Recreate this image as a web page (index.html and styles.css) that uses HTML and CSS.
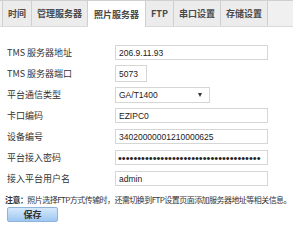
FILE: index.html
```html
<!DOCTYPE html>
<html lang="zh-CN">

<head>
    <meta charset="UTF-8">
    <title>照片服务器</title>
    <link rel="stylesheet" href="styles.css">
</head>

<body>
    <ul class="tabs">
        <li class="tab">时间</li>
        <li class="tab">管理服务器</li>
        <li class="tab active">照片服务器</li>
        <li class="tab">FTP</li>
        <li class="tab">串口设置</li>
        <li class="tab">存储设置</li>
    </ul>

    <div class="form">
        <div class="row">
            <label>TMS 服务器地址</label>
            <input type="text" class="field" value="206.9.11.93">
        </div>
        <div class="row">
            <label>TMS 服务器端口</label>
            <input type="text" class="field port" value="5073">
        </div>
        <div class="row">
            <label>平台通信类型</label>
            <div class="select">
                <span>GA/T1400</span>
                <span class="arrow"></span>
            </div>
        </div>
        <div class="row">
            <label>卡口编码</label>
            <input type="text" class="field" value="EZIPC0">
        </div>
        <div class="row">
            <label>设备编号</label>
            <input type="text" class="field" value="34020000001210000625">
        </div>
        <div class="row">
            <label>平台接入密码</label>
            <input type="password" class="field pass" value="abcdefghijklmnopqrstuvwxyzabcdefghijk">
        </div>
        <div class="row">
            <label>接入平台用户名</label>
            <input type="text" class="field" value="admin">
        </div>

        <p class="note"><b>注意：</b>照片选择FTP方式传输时，还需切换到FTP设置页面添加服务器地址等相关信息。</p>
        <button class="save">保存</button>
    </div>
</body>

</html>
```

FILE: styles.css
```css
body {
    margin: 0;
    background-color: #fff;
    font-family: "Noto Sans CJK SC", "Liberation Sans", sans-serif;
    font-size: 9px;
    color: #333;
}

.tabs {
    display: flex;
    margin: 0;
    padding: 0 0 0 2px;
    list-style: none;
    height: 27px;
    background-color: #f0f0f0;
    border-top: 1px solid #d0d0d0;
    border-bottom: 1px solid #dadada;
    box-sizing: border-box;
}

.tab {
    display: flex;
    align-items: center;
    padding: 0 5px;
    font-size: 9px;
    font-weight: bold;
    color: #4a4a4a;
    border-right: 1px solid #cfcfcf;
    background-color: #ececec;
}

.tab:first-child {
    border-left: 1px solid #cfcfcf;
}

.tab.active {
    padding: 0 6px;
    background-color: #fff;
    margin-bottom: -1px;
}

.form {
    padding: 15px 0 0 7px;
}

.row {
    display: flex;
    align-items: center;
    height: 21px;
}

.row label {
    width: 108px;
    color: #333;
}

.field {
    width: 153px;
    height: 15px;
    padding: 0 3px;
    box-sizing: border-box;
    border: 1px solid #d6d6d6;
    font-family: "Liberation Sans", sans-serif;
    font-size: 8.5px;
    color: #222;
    outline: none;
}

.field.port {
    width: 32px;
    height: 17px;
}

.field.pass {
    font-size: 11px;
    padding: 0 2px;
}

.select {
    display: flex;
    align-items: center;
    justify-content: space-between;
    width: 95px;
    height: 16px;
    padding: 0 7px 0 3px;
    box-sizing: border-box;
    border: 1px solid #d6d6d6;
    font-family: "Liberation Sans", sans-serif;
    font-size: 8.5px;
    color: #222;
}

.arrow {
    width: 0;
    height: 0;
    border-left: 2.5px solid transparent;
    border-right: 2.5px solid transparent;
    border-top: 4px solid #333;
}

.note {
    margin: 5px 0 0 -2px;
    font-size: 8px;
    letter-spacing: -0.55px;
    line-height: 12px;
    color: #333;
    white-space: nowrap;
}

.save {
    display: block;
    margin-top: 1px;
    width: 51px;
    height: 15px;
    padding: 0;
    border: 1px solid #8fb4dc;
    border-radius: 2px;
    background: linear-gradient(#d6e9fc, #9ec7f2);
    font-family: "Noto Sans CJK SC", sans-serif;
    font-size: 9px;
    font-weight: bold;
    color: #333;
}
```
